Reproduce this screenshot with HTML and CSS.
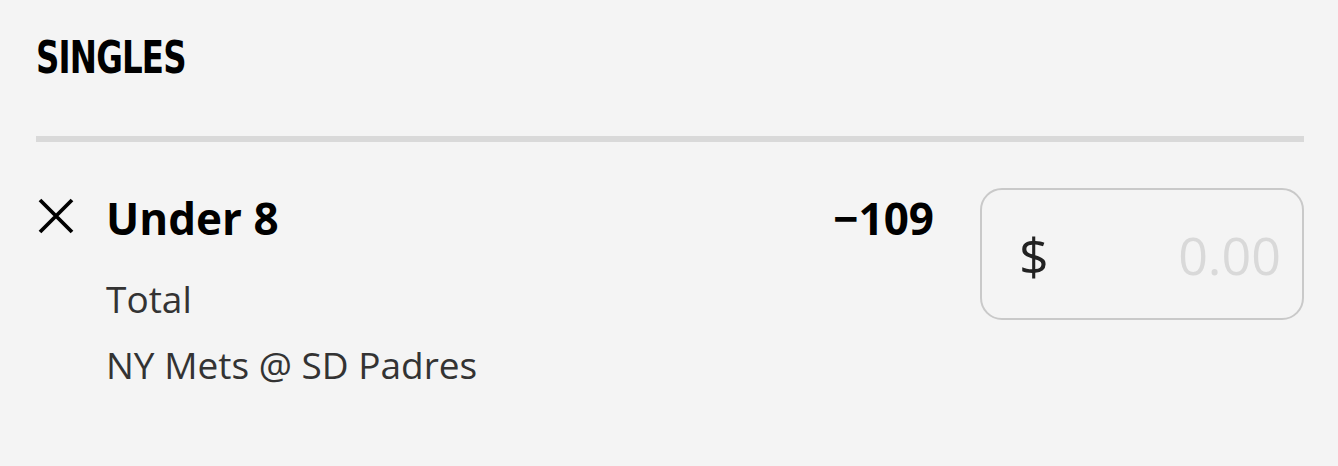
FILE: index.html
```html
<!DOCTYPE html>
<html>
<head>
<meta charset="utf-8">
<link rel="stylesheet" href="styles.css">
</head>
<body>
<section class="betslip">
  <h2 class="title">SINGLES</h2>
  <div class="divider"></div>
  <div class="bet">
    <button class="remove" aria-label="Remove">
      <svg width="36" height="36" viewBox="0 0 36 36"><path d="M2 2 L34 34 M34 2 L2 34" stroke="#000" stroke-width="3.8" fill="none"/></svg>
    </button>
    <div class="info">
      <div class="selection">Under 8</div>
      <div class="market">Total</div>
      <div class="event">NY Mets @ SD Padres</div>
    </div>
    <div class="odds">−109</div>
    <label class="stake">
      <span class="currency">$</span>
      <span class="amount">0.00</span>
    </label>
  </div>
</section>
</body>
</html>
```

FILE: styles.css
```css
html, body {
  margin: 0;
  padding: 0;
  background: #f4f4f4;
}
body {
  font-family: "Open Sans", "Liberation Sans", sans-serif;
  color: #222;
}
.betslip {
  padding: 28px 34px 0 36px;
}
.title {
  margin: 0;
  font-family: "DejaVu Sans", sans-serif;
  font-stretch: condensed;
  font-weight: 900;
  font-size: 44px;
  line-height: 60px;
  letter-spacing: -1px;
  color: #000;
  transform: scaleX(0.82);
  transform-origin: left center;
}
.divider {
  height: 6px;
  background: #d9d9d9;
  margin-top: 48px;
}
.bet {
  display: flex;
  align-items: flex-start;
  margin-top: 46px;
}
.remove {
  border: 0;
  background: none;
  padding: 0;
  margin: 10px 0 0 2px;
  width: 36px;
  height: 36px;
  cursor: pointer;
}
.remove svg { display: block; }
.info {
  flex: 1;
  margin-left: 32px;
}
.selection {
  font-weight: 700;
  font-size: 44px;
  line-height: 60px;
  color: #000;
}
.market, .event {
  font-size: 37px;
  line-height: 50px;
  color: #333;
}
.market { margin-top: 26px; }
.event { margin-top: 16px; }
.odds {
  font-weight: 700;
  font-size: 44px;
  line-height: 60px;
  color: #000;
  margin-right: 46px;
}
.stake {
  box-sizing: border-box;
  width: 324px;
  height: 132px;
  border: 2px solid #c9c9c9;
  border-radius: 22px;
  display: flex;
  align-items: center;
  justify-content: space-between;
  padding: 0 21px 0 37px;
  font-size: 52px;
}
.currency { color: #222; }
.amount { color: #d9d9d9; }
```
